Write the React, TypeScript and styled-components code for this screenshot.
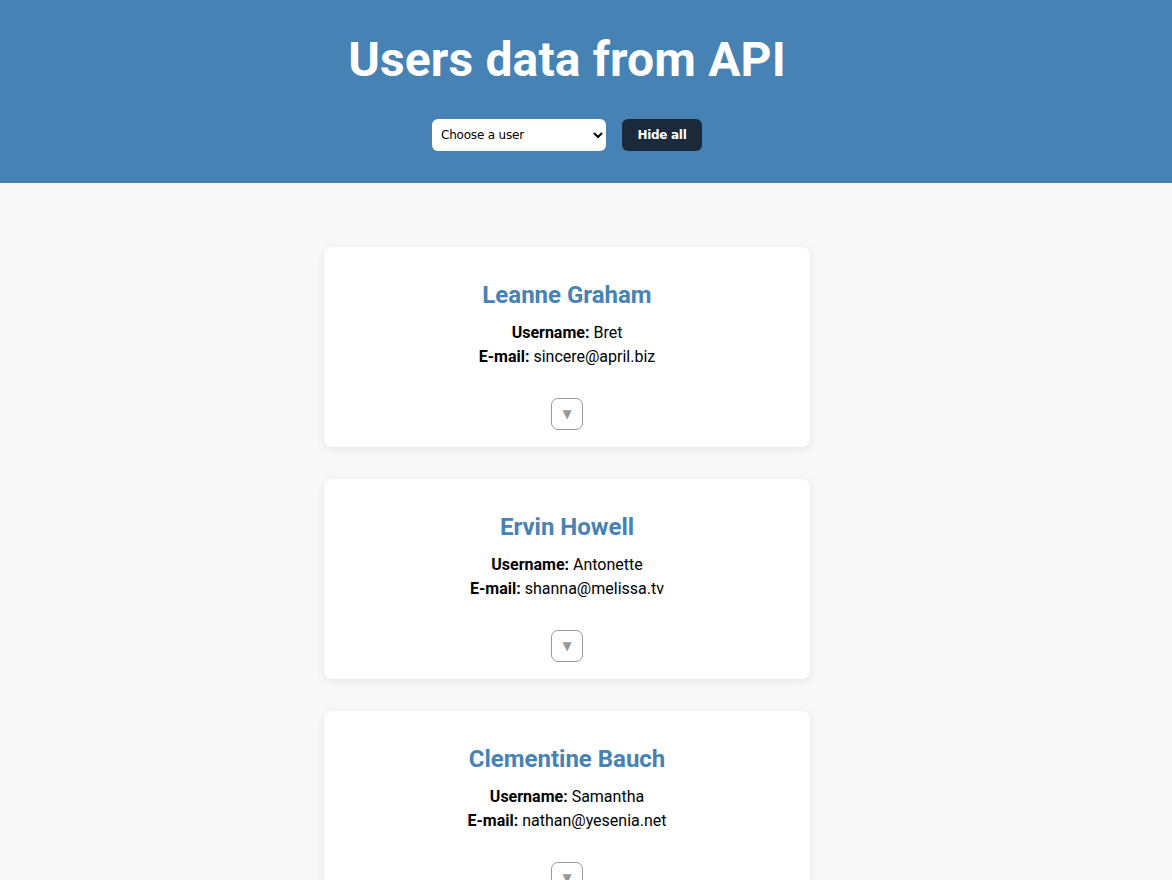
import React from "react";
import styled, { createGlobalStyle } from "styled-components";

const GlobalStyle = createGlobalStyle`
  html, body { margin: 0; padding: 0; }
  body {
    background: #f8f8f8;
    font-family: Roboto, "Liberation Sans", sans-serif;
    color: #000;
  }
`;

const Header = styled.header`
  background: #4682b4;
  height: 183px;
  box-sizing: border-box;
  padding: 30px 38px 0 0;
  display: flex;
  flex-direction: column;
  align-items: center;
`;

const Title = styled.h1`
  margin: 0;
  font-family: Roboto, sans-serif;
  font-weight: 700;
  font-size: 48px;
  line-height: 60px;
  letter-spacing: 0.15px;
  color: #fff;
`;

const Controls = styled.div`
  margin-top: 29px;
  display: flex;
  gap: 16px;
`;

const Select = styled.select`
  width: 174px;
  height: 32px;
  border: none;
  border-radius: 6px;
  background: #fff;
  padding: 0 4px 0 5px;
  font-family: "DejaVu Sans", Tahoma, sans-serif;
  font-size: 12px;
  letter-spacing: -0.2px;
  color: #000;
`;

const HideButton = styled.button`
  width: 80px;
  height: 32px;
  border: none;
  border-radius: 6px;
  background: #1b2a3a;
  color: #fff;
  font-family: "DejaVu Sans", Tahoma, sans-serif;
  font-weight: 700;
  font-size: 12px;
  letter-spacing: -0.3px;
`;

const List = styled.main`
  padding: 64px 38px 32px 0;
  display: flex;
  flex-direction: column;
  align-items: center;
  gap: 32px;
`;

const Card = styled.section`
  width: 486px;
  box-sizing: border-box;
  background: #fff;
  border-radius: 8px;
  box-shadow: 0 2px 8px rgba(0, 0, 0, 0.08);
  padding: 34px 16px 17px;
  display: flex;
  flex-direction: column;
  align-items: center;
  text-align: center;
`;

const Name = styled.h2`
  margin: 0 0 12px;
  font-size: 24px;
  line-height: 28px;
  font-weight: 700;
  color: #4682b4;
`;

const Line = styled.p`
  margin: 0;
  font-size: 16px;
  line-height: 24px;
`;

const Label = styled.strong`
  font-weight: 700;
`;

const Toggle = styled.button`
  margin-top: 29px;
  width: 32px;
  height: 32px;
  box-sizing: border-box;
  border: 1px solid #999;
  border-radius: 7px;
  background: #fff;
  color: #999;
  font-size: 12px;
  padding: 0;
  display: flex;
  align-items: center;
  justify-content: center;
  font-family: "DejaVu Sans", sans-serif;
`;

const users = [
  { name: "Leanne Graham", username: "Bret", email: "sincere@april.biz" },
  { name: "Ervin Howell", username: "Antonette", email: "shanna@melissa.tv" },
  { name: "Clementine Bauch", username: "Samantha", email: "nathan@yesenia.net" },
];

export default function App() {
  return (
    <>
      <GlobalStyle />
      <Header>
        <Title>Users data from API</Title>
        <Controls>
          <Select defaultValue="">
            <option value="">Choose a user</option>
            {users.map((u) => (
              <option key={u.username} value={u.username}>
                {u.name}
              </option>
            ))}
          </Select>
          <HideButton>Hide all</HideButton>
        </Controls>
      </Header>
      <List>
        {users.map((u) => (
          <Card key={u.username}>
            <Name>{u.name}</Name>
            <Line>
              <Label>Username:</Label> {u.username}
            </Line>
            <Line>
              <Label>E-mail:</Label> {u.email}
            </Line>
            <Toggle aria-label="Expand">▼</Toggle>
          </Card>
        ))}
      </List>
    </>
  );
}
